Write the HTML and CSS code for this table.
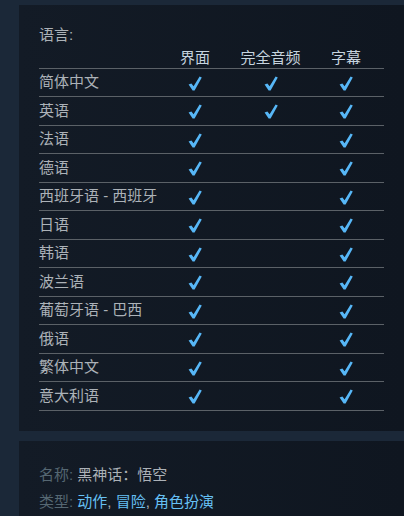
FILE: index.html
```html
<!DOCTYPE html>
<html lang="zh-CN">
<head>
  <meta charset="UTF-8">
  <meta name="viewport" content="width=device-width, initial-scale=1">
  <title>黑神话：悟空 - 语言</title>
  <link rel="stylesheet" href="styles.css">
</head>
<body>
  <div class="page">
    <div class="panel">
      <div class="lang-title">语言:</div>
      <table class="lang-table">
        <colgroup>
          <col class="c-name"><col class="c-ui"><col class="c-audio"><col class="c-sub">
        </colgroup>
        <tr>
          <th class="name-col"></th>
          <th>界面</th>
          <th>完全音频</th>
          <th>字幕</th>
        </tr>
        <tbody id="langRows"></tbody>
      </table>
    </div>

    <div class="panel details">
      <div class="detail-row"><span class="dim">名称:</span> 黑神话：悟空</div>
      <div class="detail-row"><span class="dim">类型:</span> <a href="#">动作</a>, <a href="#">冒险</a>, <a href="#">角色扮演</a></div>
    </div>
  </div>

<script>
const langs = [
  ['简体中文', 1, 1, 1],
  ['英语', 1, 1, 1],
  ['法语', 1, 0, 1],
  ['德语', 1, 0, 1],
  ['西班牙语 - 西班牙', 1, 0, 1],
  ['日语', 1, 0, 1],
  ['韩语', 1, 0, 1],
  ['波兰语', 1, 0, 1],
  ['葡萄牙语 - 巴西', 1, 0, 1],
  ['俄语', 1, 0, 1],
  ['繁体中文', 1, 0, 1],
  ['意大利语', 1, 0, 1]
];

const check = `<svg class="check" width="14" height="15" viewBox="0 0 14 15">
  <path d="M0.6 8.6 L3.4 7.4 L5.6 10.2 L11.6 0.4 L13.8 1.6 L6.6 14.6 L4.6 14.6 Z"/>
</svg>`;

let html = '';
for (const l of langs) {
  html += `<tr>
    <td class="name-col">${l[0]}</td>
    <td>${l[1] ? check : ''}</td>
    <td>${l[2] ? check : ''}</td>
    <td>${l[3] ? check : ''}</td>
  </tr>`;
}
document.getElementById('langRows').innerHTML = html;
</script>
</body>
</html>
```

FILE: styles.css
```css
* { box-sizing: border-box; }
body { margin: 0; background: #1b2838; font-family: Arial, "Liberation Sans", "Noto Sans CJK SC", sans-serif; font-size: 15px; color: #acb2b8; }
.page { padding: 5px 0 0 19px; height: 516px; overflow: hidden; }
.panel { background: linear-gradient(to right, #131b26, #0f1620); padding: 20px 20px 0 20px; height: 426px; }
.lang-title { line-height: 20px; height: 20px; }
.lang-table { width: 345px; border-collapse: collapse; table-layout: fixed; }
.c-name { width: 118px; }
.c-ui { width: 76px; }
.c-audio { width: 75px; }
.c-sub { width: 76px; }
.lang-table th { font-weight: normal; color: #c6d4df; text-align: center; line-height: 20px; height: 23px; padding: 0; vertical-align: bottom; border-bottom: 1px solid #5b6167; white-space: nowrap; }
.lang-table td { height: 28.5px; padding: 0; text-align: center; border-bottom: 1px solid #5b6167; line-height: 20px; white-space: nowrap; }
.lang-table .name-col { text-align: left; }
.check { fill: #57b7f7; vertical-align: middle; }
.details { margin-top: 10px; padding: 20px 20px 0 20px; height: 100px; }
.detail-row { line-height: 27px; }
.dim { color: #556772; }
.details a { color: #66c0f4; text-decoration: none; }
```
